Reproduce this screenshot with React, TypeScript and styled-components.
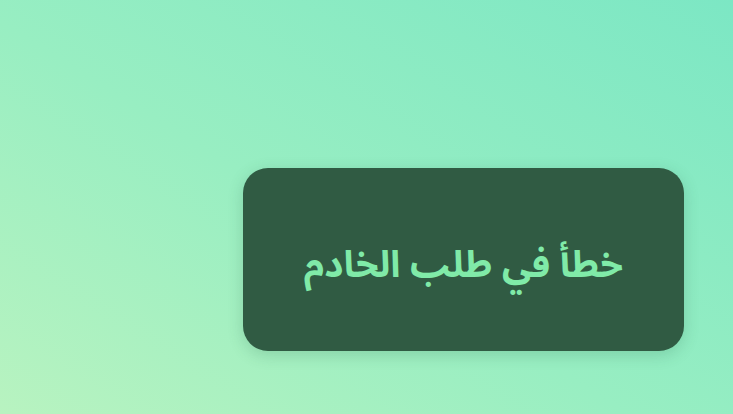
import React from "react";
import styled, { createGlobalStyle } from "styled-components";

const GlobalStyle = createGlobalStyle`
  html, body {
    margin: 0;
    padding: 0;
    height: 100%;
  }
  #root {
    height: 100%;
  }
`;

const Page = styled.div`
  box-sizing: border-box;
  width: 100%;
  height: 100vh;
  display: flex;
  justify-content: flex-end;
  align-items: flex-start;
  padding: 168px 49px 0 0;
  background: linear-gradient(
    32deg,
    #b8f3c0 0%,
    #98eec2 45%,
    #7ce7c4 100%
  );
  overflow: hidden;
`;

const Toast = styled.div`
  box-sizing: border-box;
  width: 441px;
  height: 183px;
  border-radius: 25px;
  background: #305b43;
  box-shadow: 0 4px 16px rgba(30, 90, 60, 0.2);
  display: flex;
  align-items: center;
  justify-content: center;
`;

const Message = styled.p`
  margin: 12px 0 0;
  direction: rtl;
  color: #80eaa8;
  font-family: "Noto Sans Arabic", "Noto Sans", "DejaVu Sans", sans-serif;
  font-size: 37px;
  font-weight: 700;
  line-height: 1;
`;

const App = () => {
  return (
    <>
      <GlobalStyle />
      <Page>
        <Toast>
          <Message>خطأ في طلب الخادم</Message>
        </Toast>
      </Page>
    </>
  );
};

export default App;
